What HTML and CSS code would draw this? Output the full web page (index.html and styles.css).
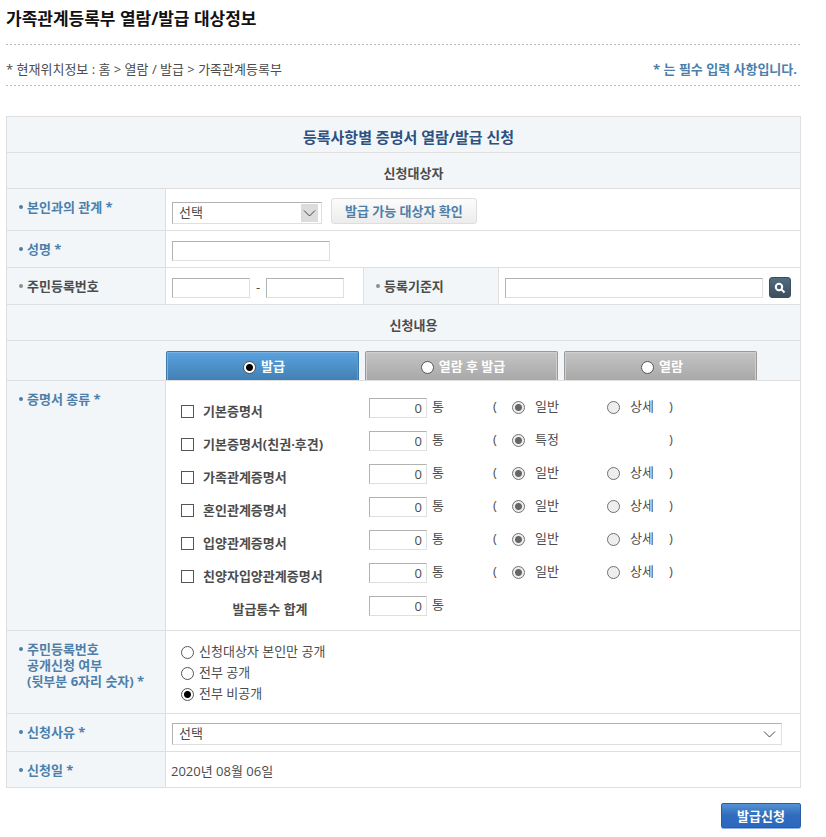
FILE: index.html
```html
<!DOCTYPE html>
<html lang="ko">
<head>
<meta charset="utf-8">
<title>가족관계등록부 열람/발급 대상정보</title>
<link rel="stylesheet" href="styles.css">
</head>
<body>
<main class="page">
  <h1 class="page-title">가족관계등록부 열람/발급 대상정보</h1>
  <div class="location">
    <span>* 현재위치정보 : 홈 &gt; 열람 / 발급 &gt; 가족관계등록부</span>
    <strong class="notice">* 는 필수 입력 사항입니다.</strong>
  </div>

  <form>
    <div class="sheet">
      <h2 class="band band-main">등록사항별 증명서 열람/발급 신청</h2>
      <h3 class="band">신청대상자</h3>

      <div class="row row-tall">
        <div class="head required"><label for="relation">본인과의 관계 *</label></div>
        <div class="cell">
          <span class="pick pick-boxed">
            <select id="relation"><option>선택</option></select>
            <svg class="chevron" viewBox="0 0 17 18"><path d="M3 6.500l5.500 5.500l5.500-5.500"/></svg>
          </span>
          <button type="button" class="check-btn">발급 가능 대상자 확인</button>
        </div>
      </div>

      <div class="row">
        <div class="head required"><label for="name">성명 *</label></div>
        <div class="cell"><input class="field name-field" type="text" id="name"></div>
      </div>

      <div class="row row-split">
        <div class="head"><label for="rrn1">주민등록번호</label></div>
        <div class="cell cell-rrn">
          <input class="field rrn-field" type="text" id="rrn1">
          <span class="dash">-</span>
          <input class="field rrn-field" type="text" aria-label="주민등록번호 뒷자리">
        </div>
        <div class="head"><label for="base">등록기준지</label></div>
        <div class="cell cell-base">
          <input class="field base-field" type="text" id="base">
          <button type="button" class="search-btn" aria-label="검색">
            <svg viewBox="0 0 12 12"><circle cx="5" cy="5" r="3.200"/><path d="M7.500 7.500l3 3"/></svg>
          </button>
        </div>
      </div>

      <h3 class="band">신청내용</h3>

      <div class="tabs">
        <label class="tab tab-on"><input class="radio" type="radio" name="mode" checked><span>발급</span></label>
        <label class="tab"><input class="radio" type="radio" name="mode"><span>열람 후 발급</span></label>
        <label class="tab"><input class="radio" type="radio" name="mode"><span>열람</span></label>
      </div>

      <div class="row">
        <div class="head required">증명서 종류 *</div>
        <div class="certs">
          <div class="cert">
            <label class="cert-name"><input class="check" type="checkbox">기본증명서</label>
            <label class="count"><input class="field" type="text" value="0">통</label>
            <span class="paren">(</span>
            <label class="kind"><input class="radio" type="radio" name="k1" checked disabled><span>일반</span></label>
            <label class="kind"><input class="radio" type="radio" name="k1" disabled><span>상세</span></label>
            <span class="paren">)</span>
          </div>
          <div class="cert">
            <label class="cert-name"><input class="check" type="checkbox">기본증명서(친권·후견)</label>
            <label class="count"><input class="field" type="text" value="0">통</label>
            <span class="paren">(</span>
            <label class="kind"><input class="radio" type="radio" name="k2" checked disabled><span>특정</span></label>
            <span></span>
            <span class="paren">)</span>
          </div>
          <div class="cert">
            <label class="cert-name"><input class="check" type="checkbox">가족관계증명서</label>
            <label class="count"><input class="field" type="text" value="0">통</label>
            <span class="paren">(</span>
            <label class="kind"><input class="radio" type="radio" name="k3" checked disabled><span>일반</span></label>
            <label class="kind"><input class="radio" type="radio" name="k3" disabled><span>상세</span></label>
            <span class="paren">)</span>
          </div>
          <div class="cert">
            <label class="cert-name"><input class="check" type="checkbox">혼인관계증명서</label>
            <label class="count"><input class="field" type="text" value="0">통</label>
            <span class="paren">(</span>
            <label class="kind"><input class="radio" type="radio" name="k4" checked disabled><span>일반</span></label>
            <label class="kind"><input class="radio" type="radio" name="k4" disabled><span>상세</span></label>
            <span class="paren">)</span>
          </div>
          <div class="cert">
            <label class="cert-name"><input class="check" type="checkbox">입양관계증명서</label>
            <label class="count"><input class="field" type="text" value="0">통</label>
            <span class="paren">(</span>
            <label class="kind"><input class="radio" type="radio" name="k5" checked disabled><span>일반</span></label>
            <label class="kind"><input class="radio" type="radio" name="k5" disabled><span>상세</span></label>
            <span class="paren">)</span>
          </div>
          <div class="cert">
            <label class="cert-name"><input class="check" type="checkbox">친양자입양관계증명서</label>
            <label class="count"><input class="field" type="text" value="0">통</label>
            <span class="paren">(</span>
            <label class="kind"><input class="radio" type="radio" name="k6" checked disabled><span>일반</span></label>
            <label class="kind"><input class="radio" type="radio" name="k6" disabled><span>상세</span></label>
            <span class="paren">)</span>
          </div>
          <div class="cert">
            <label class="cert-name cert-total" for="total">발급통수 합계</label>
            <label class="count"><input class="field" type="text" id="total" value="0">통</label>
          </div>
        </div>
      </div>

      <div class="row">
        <div class="head required">주민등록번호<br>공개신청 여부<br>(뒷부분 6자리 숫자) *</div>
        <div class="options">
          <label class="option"><input class="radio" type="radio" name="open"><span>신청대상자 본인만 공개</span></label>
          <label class="option"><input class="radio" type="radio" name="open"><span>전부 공개</span></label>
          <label class="option"><input class="radio" type="radio" name="open" checked><span>전부 비공개</span></label>
        </div>
      </div>

      <div class="row row-reason">
        <div class="head required"><label for="reason">신청사유 *</label></div>
        <div class="cell cell-reason">
          <span class="pick pick-wide">
            <select id="reason"><option>선택</option></select>
            <svg class="chevron" viewBox="0 0 17 18"><path d="M3 6.500l5.500 5.500l5.500-5.500"/></svg>
          </span>
        </div>
      </div>

      <div class="row row-date">
        <div class="head required">신청일 *</div>
        <div class="date">2020년 08월 06일</div>
      </div>
    </div>

    <div class="actions"><button type="submit" class="submit">발급신청</button></div>
  </form>
</main>
</body>
</html>
```

FILE: styles.css
```css
* { box-sizing: border-box; }

body {
  margin: 0;
  background: #fff;
  color: #4c4c4c;
  font: 13px/16px "Open Sans", "Noto Sans CJK KR", sans-serif;
}

input, select, button { margin: 0; font: inherit; color: inherit; }

.page { padding: 0 25px 9px 6px; }

.page-title {
  margin: 0;
  padding: 7px 0 13px;
  color: #111;
  font-size: 17px;
  line-height: 24px;
}

/* dotted rules above and below the breadcrumb */
.location {
  display: flex;
  justify-content: space-between;
  height: 42px;
  padding: 17px 4px 0 0;
  background:
    repeating-linear-gradient(90deg, #b9b9b9 0 2px, transparent 2px 4px) top / 100% 1px no-repeat,
    repeating-linear-gradient(90deg, #b9b9b9 0 2px, transparent 2px 4px) bottom / 100% 1px no-repeat;
}

.notice { color: #4c7fa9; }

.sheet {
  margin-top: 30px;
  border: 1px solid #dfdfdf;
  border-bottom: 0;
}

.band {
  margin: 0;
  padding: 12px 0 7px 20px;
  border-bottom: 1px solid #dfdfdf;
  background: #f2f6f9;
  font-size: 13px;
  line-height: 16px;
  text-align: center;
}
.band-main { padding-left: 10px; color: #2d5180; font-size: 15px; }

.row {
  display: grid;
  grid-template-columns: 159px 1fr;
  min-height: 37px;
  border-bottom: 1px solid #dfdfdf;
}
.row-split { grid-template-columns: 159px 198px 135px 1fr; }
.row-tall { min-height: 42px; }
.row-reason { min-height: 38px; }
.row-date { min-height: 36px; }

.head {
  position: relative;
  padding: 10px 0 9px 20px;
  border-right: 1px solid #dfdfdf;
  background: #f2f6f9;
  font-weight: bold;
}
.head::before {
  content: "";
  position: absolute;
  left: 12px;
  top: 16px;
  width: 4px;
  height: 4px;
  border-radius: 50%;
  background: #8c8c8c;
}
.required { color: #4c7fa9; }
.required::before { background: #4c7fa9; }

.cell {
  display: flex;
  align-items: flex-end;
  gap: 6px;
  padding: 0 6px 6px;
}
.cell-rrn { border-right: 1px solid #dfdfdf; }
.cell-base { padding-right: 9px; }
.cell-reason { padding-right: 18px; }

.field {
  height: 20px;
  padding: 0 4px;
  border: 1px solid #dfdfdf;
  border-top-color: #b2b2b2;
  border-left-color: #b2b2b2;
  border-radius: 0;
  background: #fff;
}
.name-field { width: 158px; }
.rrn-field { width: 78px; }
.base-field { flex: 1; min-width: 0; }
.dash { line-height: 22px; }

.pick { position: relative; display: flex; width: 150px; margin-right: 3px; }
.pick-wide { flex: 1; margin-right: 0; }
.pick select {
  width: 100%;
  height: 22px;
  padding: 0 6px 2px;
  border: 1px solid #dfdfdf;
  border-top-color: #b2b2b2;
  border-left-color: #b2b2b2;
  border-radius: 0;
  background: #fff;
  appearance: none;
}
.chevron {
  position: absolute;
  top: 2px;
  right: 4px;
  width: 17px;
  height: 18px;
  fill: none;
  stroke: #444;
  pointer-events: none;
}
.pick-boxed .chevron { background: #dcdcdc; }

.check-btn {
  height: 26px;
  padding: 0 13px;
  border: 1px solid #dedede;
  border-radius: 3px;
  background: linear-gradient(#fcfcfc, #ececec);
  color: #4c7fa9;
  font-weight: bold;
}

.search-btn {
  display: grid;
  place-items: center;
  width: 22px;
  height: 21px;
  padding: 0;
  border: 1px solid #3a4e5e;
  border-radius: 3px;
  background: linear-gradient(#516b80, #3c4f5f);
}
.search-btn svg { width: 12px; height: 12px; fill: none; stroke: #fff; stroke-width: 2; }

.tabs {
  display: flex;
  gap: 6px;
  height: 40px;
  padding: 10px 43px 0 159px;
  border-bottom: 1px solid #dfdfdf;
  background: #f2f6f9;
}
.tab {
  display: flex;
  flex: 1;
  align-items: center;
  justify-content: center;
  gap: 5px;
  padding: 3px 0 0 3px;
  border: 1px solid #999;
  border-bottom: 0;
  border-radius: 2px 2px 0 0;
  background: linear-gradient(#c4c4c4, #a8a8a8);
  box-shadow: inset 1px 1px #cfcfcf, inset -1px 0 #cfcfcf;
  color: #fff;
  font-weight: bold;
}
.tab-on {
  border-color: #3a78ae;
  background: linear-gradient(#5aa2df, #4280b4);
  box-shadow: inset 1px 1px #79b2e2, inset -1px 0 #5c9bd0;
}
.tab span, .option span, .kind span, .paren { padding-bottom: 4px; }

.radio, .check {
  appearance: none;
  flex: none;
  width: 13px;
  height: 13px;
  border: 1px solid #555;
  background: #fff;
}
.radio { border-radius: 50%; }
.radio:checked { background: radial-gradient(circle, #000 0 3px, #fff 4px); }
.radio:disabled { border-color: #707070; background: #eee; }
.radio:disabled:checked { background: radial-gradient(circle, #666 0 3px, #eee 4px); }

.certs { padding: 10px 0 8px 15px; }
.cert {
  display: grid;
  grid-template-columns: 188px 124px 19px 95px 62px 1fr;
  align-items: center;
  height: 33px;
}
.cert-name {
  display: flex;
  align-items: center;
  gap: 9px;
  padding-top: 7px;
  font-weight: bold;
}
.cert-total { justify-content: center; padding-right: 10px; }
.count { display: flex; align-items: flex-start; gap: 5px; }
.count .field { width: 58px; text-align: right; }
.kind { display: flex; align-items: center; gap: 10px; }

.options { padding: 11px 0 8px 15px; }
.option { display: flex; align-items: center; gap: 5px; height: 21px; }

.date { padding: 11px 5px 0; }

.actions { display: flex; justify-content: flex-end; margin-top: 15px; }
.submit {
  width: 80px;
  height: 25px;
  padding: 0;
  border: 1px solid #2a5ca4;
  border-radius: 2px;
  background: linear-gradient(#5591d2, #2f6cbe 50%, #2c68bd);
  box-shadow: 0 1px #8fb4e4;
  color: #fff;
  font-weight: bold;
}
```
